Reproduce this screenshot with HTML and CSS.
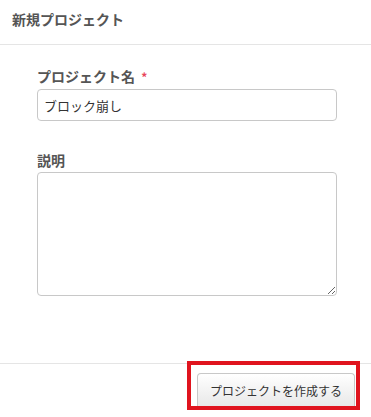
FILE: index.html
```html
<!DOCTYPE html>
<html lang="ja">
<head>
  <meta charset="UTF-8">
  <meta name="viewport" content="width=device-width, initial-scale=1.0">
  <title>新規プロジェクト</title>
  <link rel="stylesheet" href="styles.css">
</head>
<body>
  <div class="modal">
    <div class="modal-header">新規プロジェクト</div>

    <div class="modal-body">
      <label class="field-label">プロジェクト名 <span class="required">*</span></label>
      <input class="text-input" type="text" value="ブロック崩し">

      <label class="field-label field-gap">説明</label>
      <textarea class="text-area"></textarea>
    </div>

    <div class="modal-footer">
      <span class="highlight">
        <button class="create-button">プロジェクトを作成する</button>
      </span>
    </div>
  </div>
</body>
</html>
```

FILE: styles.css
```css
body {
  margin: 0;
  background-color: white;
  color: #333;
  font-family: "Noto Sans CJK JP", "Noto Sans", sans-serif;
}

.modal {
  width: 371px;
  height: 417px;
  display: flex;
  flex-direction: column;
}

.modal-header {
  box-sizing: border-box;
  height: 45px;
  padding: 9px 12px 0;
  border-bottom: 1px solid #e5e5e5;
  font-size: 14px;
  font-weight: bold;
  color: #555;
  line-height: 20px;
}

.modal-body {
  flex: 1;
  display: flex;
  flex-direction: column;
  padding: 21px 34px 0 37px;
}

.field-label {
  font-size: 14px;
  font-weight: bold;
  color: #555;
  line-height: 20px;
  margin-bottom: 2px;
}

.field-gap {
  margin-top: 29px;
}

.required {
  color: #e8465a;
  font-size: 12px;
  margin-left: 3px;
}

.text-input,
.text-area {
  box-sizing: border-box;
  width: 300px;
  border: 1px solid #c8c8c8;
  border-radius: 4px;
  font-family: inherit;
  font-size: 13px;
  color: #333;
  padding: 0 6px;
  margin: 0;
}

.text-input {
  height: 32px;
}

.text-area {
  height: 124px;
  resize: both;
}

.modal-footer {
  display: flex;
  justify-content: flex-end;
  border-top: 1px solid #e5e5e5;
  padding: 0 11px 7px 0;
}

.highlight {
  margin-top: -3px;
  border: 4px solid #e0141e;
  padding: 8px 1px 0 6px;
  display: flex;
}

.create-button {
  box-sizing: border-box;
  width: 158px;
  height: 33px;
  padding: 0;
  border: 1px solid #c8c8c8;
  border-bottom: none;
  border-radius: 4px 4px 0 0;
  background: linear-gradient(#ffffff, #e8e8e8);
  font-family: inherit;
  font-size: 12px;
  color: #333;
}
```
